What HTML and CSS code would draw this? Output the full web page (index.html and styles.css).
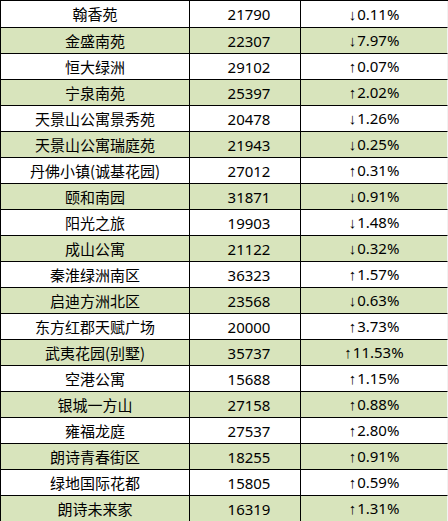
FILE: index.html
```html
<!DOCTYPE html>
<html lang="zh-CN">
<head>
<meta charset="utf-8">
<link rel="stylesheet" href="styles.css">
</head>
<body>
<table class="price-table">
  <colgroup>
    <col class="c-name"><col class="c-price"><col class="c-change">
  </colgroup>
  <tbody>
    <tr><td>翰香苑</td><td>21790</td><td><span class="ar">↓</span>0.11%</td></tr>
    <tr class="alt"><td>金盛南苑</td><td>22307</td><td><span class="ar">↓</span>7.97%</td></tr>
    <tr><td>恒大绿洲</td><td>29102</td><td><span class="ar">↑</span>0.07%</td></tr>
    <tr class="alt"><td>宁泉南苑</td><td>25397</td><td><span class="ar">↑</span>2.02%</td></tr>
    <tr><td>天景山公寓景秀苑</td><td>20478</td><td><span class="ar">↓</span>1.26%</td></tr>
    <tr class="alt"><td>天景山公寓瑞庭苑</td><td>21943</td><td><span class="ar">↓</span>0.25%</td></tr>
    <tr><td>丹佛小镇(诚基花园)</td><td>27012</td><td><span class="ar">↑</span>0.31%</td></tr>
    <tr class="alt"><td>颐和南园</td><td>31871</td><td><span class="ar">↓</span>0.91%</td></tr>
    <tr><td>阳光之旅</td><td>19903</td><td><span class="ar">↓</span>1.48%</td></tr>
    <tr class="alt"><td>成山公寓</td><td>21122</td><td><span class="ar">↓</span>0.32%</td></tr>
    <tr><td>秦淮绿洲南区</td><td>36323</td><td><span class="ar">↑</span>1.57%</td></tr>
    <tr class="alt"><td>启迪方洲北区</td><td>23568</td><td><span class="ar">↓</span>0.63%</td></tr>
    <tr><td>东方红郡天赋广场</td><td>20000</td><td><span class="ar">↑</span>3.73%</td></tr>
    <tr class="alt"><td>武夷花园(别墅)</td><td>35737</td><td><span class="ar">↑</span>11.53%</td></tr>
    <tr><td>空港公寓</td><td>15688</td><td><span class="ar">↑</span>1.15%</td></tr>
    <tr class="alt"><td>银城一方山</td><td>27158</td><td><span class="ar">↑</span>0.88%</td></tr>
    <tr><td>雍福龙庭</td><td>27537</td><td><span class="ar">↑</span>2.80%</td></tr>
    <tr class="alt"><td>朗诗青春街区</td><td>18255</td><td><span class="ar">↑</span>0.91%</td></tr>
    <tr><td>绿地国际花都</td><td>15805</td><td><span class="ar">↑</span>0.59%</td></tr>
    <tr class="alt"><td>朗诗未来家</td><td>16319</td><td><span class="ar">↑</span>1.31%</td></tr>
  </tbody>
</table>
</body>
</html>
```

FILE: styles.css
```css
html, body {
  margin: 0;
  padding: 0;
  background: #ffffff;
}

.price-table {
  border-collapse: separate;
  border-spacing: 0;
  table-layout: fixed;
  width: 447px;
  border-top: 1px solid #000;
  border-left: 1px solid #000;
  font-family: "Noto Sans", "Noto Sans CJK SC", sans-serif;
  font-size: 15px;
  color: #000;
}

.c-name { width: 189px; }
.c-price { width: 111px; }
.c-change { width: 147px; }

.price-table td {
  height: 25px;
  padding: 0;
  text-align: center;
  vertical-align: middle;
  line-height: 18px;
  border-bottom: 1px solid #000;
  border-right: 1px solid #000;
  background: #ffffff;
  white-space: nowrap;
  overflow: hidden;
}

.price-table td:nth-child(2) {
  padding-left: 8px;
}

.price-table td:last-child {
  border-right: 1px solid #f2f2f2;
}

.price-table tr:first-child td {
  height: 26px;
}

.price-table tr.alt td {
  background: #d8e4bc;
}

.price-table td:first-child {
  font-family: "Noto Sans CJK SC", sans-serif;
}

.ar {
  font-family: "Liberation Sans", "DejaVu Sans", sans-serif;
  font-weight: bold;
  display: inline-block;
  margin-right: 1px;
}
```
